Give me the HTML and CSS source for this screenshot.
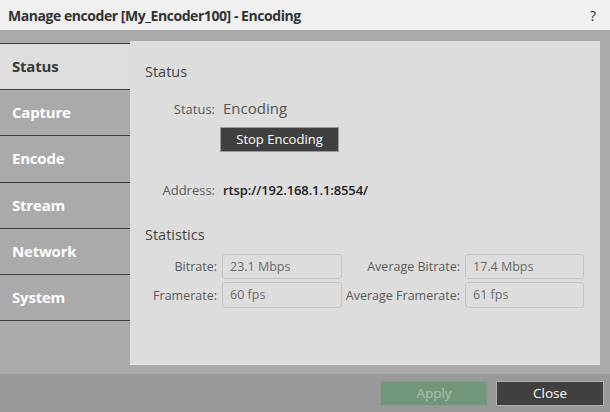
FILE: index.html
```html
<!DOCTYPE html>
<html>
<head>
<meta charset="utf-8">
<link rel="stylesheet" href="styles.css">
</head>
<body>
<div class="dialog">
  <header class="titlebar">
    <h1 class="title">Manage encoder [My_Encoder100] - Encoding</h1>
    <span class="help">?</span>
  </header>
  <div class="main">
    <nav class="sidebar">
      <div class="tab active">Status</div>
      <div class="tab">Capture</div>
      <div class="tab">Encode</div>
      <div class="tab">Stream</div>
      <div class="tab">Network</div>
      <div class="tab">System</div>
    </nav>
    <section class="panel">
      <h2 class="heading">Status</h2>
      <div class="status-grid">
        <span class="label">Status:</span>
        <span class="status-value">Encoding</span>
        <span></span>
        <button class="stop-btn">Stop Encoding</button>
        <span class="label addr-label">Address:</span>
        <span class="addr-value">rtsp://192.168.1.1:8554/</span>
      </div>
      <h2 class="heading stats-heading">Statistics</h2>
      <div class="stats-grid">
        <span class="label">Bitrate:</span>
        <div class="field">23.1 Mbps</div>
        <span class="label">Average Bitrate:</span>
        <div class="field">17.4 Mbps</div>
        <span class="label">Framerate:</span>
        <div class="field">60 fps</div>
        <span class="label">Average Framerate:</span>
        <div class="field">61 fps</div>
      </div>
    </section>
  </div>
  <footer class="footer">
    <button class="btn apply">Apply</button>
    <button class="btn close">Close</button>
  </footer>
</div>
</body>
</html>
```

FILE: styles.css
```css
* { box-sizing: border-box; }
html, body { margin: 0; padding: 0; }
body {
  width: 610px;
  height: 412px;
  overflow: hidden;
  background: #aaaaaa;
  font-family: "Open Sans", "Noto Sans", sans-serif;
}
.dialog { display: flex; flex-direction: column; height: 412px; }
.titlebar {
  height: 30px;
  background: #f0f0f0;
  display: flex;
  align-items: center;
  justify-content: space-between;
  padding: 0 14px 0 8px;
}
.title {
  margin: 0;
  font-size: 14px;
  font-weight: 700;
  color: #333;
  letter-spacing: -0.45px;
}
.help { font-size: 14px; color: #333; }
.main {
  display: flex;
  height: 344px;
  padding-top: 11px;
}
.sidebar {
  width: 130px;
  margin-top: 2px;
  border-top: 1px solid #3c3c3c;
  align-self: flex-start;
}
.tab {
  height: 46.2px;
  border-bottom: 1px solid #3c3c3c;
  display: flex;
  align-items: center;
  padding-left: 12px;
  padding-bottom: 1px;
  font-size: 15px;
  font-weight: 700;
  color: #ffffff;
  letter-spacing: -0.2px;
}
.tab.active { background: #dedede; color: #383838; }
.panel {
  width: 470px;
  height: 324px;
  background: #dddddd;
  border-bottom: 1px solid #e6e6e6;
  padding: 21px 0 0 15px;
}
.heading {
  margin: 0;
  font-size: 14.5px;
  line-height: 20px;
  font-weight: 400;
  color: #444;
}
.status-grid {
  display: grid;
  grid-template-columns: 70px auto;
  column-gap: 8px;
  align-items: baseline;
  margin-top: 15px;
}
.label {
  font-size: 12.5px;
  color: #5a5a5a;
  text-align: right;
  white-space: nowrap;
}
.status-grid .label { font-size: 13px; }
.status-value { font-size: 15px; color: #555; line-height: 22px; }
.stop-btn {
  justify-self: start;
  margin: 8px 0 0 -3px;
  width: 119px;
  height: 25px;
  background: #404040;
  border: 1px solid #9a9a9a;
  color: #fff;
  font-family: inherit;
  font-size: 13px;
  padding: 0 0 1px;
}
.addr-label { margin-top: 29px; }
.addr-value { font-size: 13px; font-weight: 600; color: #222; letter-spacing: -0.1px; }
.stats-heading { margin-top: 26px; }
.stats-grid {
  display: grid;
  grid-template-columns: 77px 120px 123px 119px;
  row-gap: 3px;
  align-items: center;
  margin-top: 9px;
}
.stats-grid .label { padding-right: 5px; }
.field {
  height: 25px;
  border: 1px solid #c4c4c4;
  border-radius: 3px;
  background: #dddddd;
  font-size: 12.5px;
  color: #6a6a6a;
  padding: 3px 0 0 7px;
}
.field:nth-of-type(n+3) { height: 26px; }
.footer {
  height: 38px;
  background: #999999;
  display: flex;
  justify-content: flex-end;
  gap: 8px;
  padding: 7px 6px 0 0;
}
.btn {
  width: 108px;
  height: 25px;
  font-family: inherit;
  font-size: 13.5px;
  padding: 0 0 1px;
}
.apply { background: #71967a; border: 1px solid #8a9e8d; color: #adc0b0; }
.close { background: #404040; border: 1px solid #b0b0b0; color: #fff; }
```
